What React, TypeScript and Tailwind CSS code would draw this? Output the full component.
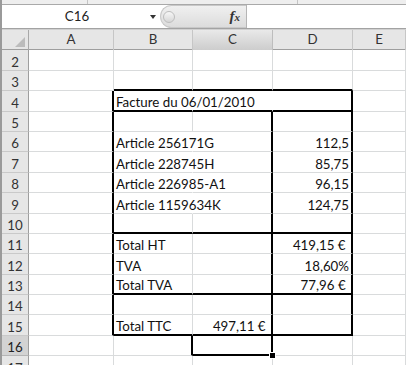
import React from "react";

type Side = "thin" | "thick" | "none";
type Cell = { text?: string; right?: boolean; r?: Side; b?: Side };

const R: Record<Side, string> = {
  thin: "border-r border-r-[#d9dbdc]",
  thick: "border-r-2 border-r-black",
  none: "border-r border-r-transparent",
};
const B: Record<Side, string> = {
  thin: "border-b border-b-[#d9dbdc]",
  thick: "border-b-2 border-b-black",
  none: "border-b border-b-transparent",
};

const cols = ["A", "B", "C", "D", "E"];

// each row: cells A..E, only what differs from a plain cell
function row(n: number): Cell[] {
  const cells: Cell[] = cols.map(() => ({}));
  const [a, b, c, d] = cells;
  const inBox = n >= 5 && n <= 15;
  if (n === 3) {
    b.b = c.b = d.b = "thick";
  }
  if (n === 4) {
    a.r = "thick";
    b.r = "none";
    c.r = "none";
    d.r = "thick";
    b.b = c.b = d.b = "thick";
    b.text = "Facture du 06/01/2010";
  }
  if (inBox) {
    a.r = "thick";
    c.r = "thick";
    d.r = "thick";
  }
  if (n === 10 || n === 13 || n === 15) {
    b.b = c.b = d.b = "thick";
  }
  const items: Record<number, [string, string]> = {
    6: ["Article 256171G", "112,5"],
    7: ["Article 228745H", "85,75"],
    8: ["Article 226985-A1", "96,15"],
    9: ["Article 1159634K", "124,75"],
    11: ["Total HT", "419,15 €\u00a0"],
    12: ["TVA", "18,60%"],
    13: ["Total TVA", "77,96 €\u00a0"],
  };
  if (items[n]) {
    b.text = items[n][0];
    d.text = items[n][1];
    d.right = true;
    if (n >= 6 && n <= 9) b.r = "none";
  }
  if (n === 15) {
    b.text = "Total TTC";
    c.text = "497,11 €\u00a0";
    c.right = true;
  }
  if (n === 16) {
    b.r = "thick";
    c.r = "thick";
    c.b = "thick";
  }
  return cells;
}

const rows = Array.from({ length: 16 }, (_, i) => i + 2);

export default function App() {
  return (
    <div
      className="w-[406px] h-[365px] overflow-hidden bg-white border-l-2 border-l-[#9a9a9a] text-[13.3px] text-[#111]"
      style={{ fontFamily: "Lato, 'Liberation Sans', sans-serif" }}
    >
      {/* ribbon bottom edge */}
      <div className="h-[5px] flex bg-[#eeeeee] border-b border-b-[#a9a9a9]">
        <div className="w-[86px] border-r border-r-[#c4c4c4]" />
        <div className="w-[210px] border-r border-r-[#c4c4c4]" />
      </div>

      {/* formula bar */}
      <div className="h-[24px] flex items-stretch border-b border-b-[#a3a3a3]">
        <div className="w-[158px] flex items-center">
          <span className="flex-1 text-center text-[13.3px] text-[#222] pl-[2px]">C16</span>
          <svg width="6" height="4" viewBox="0 0 6 4" className="mr-[4px]">
            <path d="M0 0h6L3 4z" fill="#333" />
          </svg>
        </div>
        <div className="w-[86px] flex items-center rounded-l-full bg-gradient-to-b from-[#f0f0f0] to-[#dcdcdc] border border-[#c8c8c8] border-r-0">
          <div className="w-[12px] h-[12px] ml-[2px] rounded-full bg-gradient-to-b from-[#f7f7f7] to-[#d6d6d6] border border-[#bdbdbd]" />
          <span
            className="ml-auto mr-[6px] italic font-bold text-[15px] text-[#333] leading-none"
            style={{ fontFamily: "'Liberation Serif', serif" }}
          >
            f<span className="text-[11px]">x</span>
          </span>
        </div>
        <div className="flex-1 border-l border-l-[#b5b5b5] bg-white" />
      </div>

      {/* column headers */}
      <div className="grid grid-cols-[27px_85px_79px_80px_80px_1fr] h-[21.4px] border-t border-t-[#d0d0d0] border-b border-b-[#9e9e9e] bg-[#e6e6e6] text-[#333]">
        <div className="border-r border-r-[#a8a8a8] flex items-end justify-end p-[3px]">
          <svg width="10" height="10" viewBox="0 0 10 10">
            <path d="M10 0v10H0z" fill="#bcbcbc" />
          </svg>
        </div>
        {cols.map((c) => (
          <div
            key={c}
            className={
              c === "C"
                ? "flex items-center justify-center border-r border-r-[#bdbdbd] bg-gradient-to-b from-[#e9e9e9] to-[#cdcdcd]"
                : "flex items-center justify-center border-r border-r-[#c6c6c6]"
            }
          >
            {c}
          </div>
        ))}
      </div>

      {/* sheet */}
      <div className="grid grid-cols-[27px_85px_79px_80px_80px_1fr] auto-rows-[20.4px]">
        {rows.map((n) => (
          <React.Fragment key={n}>
            <div
              className={
                n === 16
                  ? "flex items-end justify-center leading-[16px] bg-[#d3d3d3] text-[#222] border-r border-r-[#9e9e9e] border-b border-b-[#b5b5b5]"
                  : "flex items-end justify-center leading-[16px] bg-[#e6e6e6] text-[#333] border-r border-r-[#9e9e9e] border-b border-b-[#c9c9c9]"
              }
            >
              {n}
            </div>
            {row(n).map((cell, i) => (
              <div
                key={i}
                className={`relative flex items-end leading-[16px] whitespace-nowrap overflow-visible ${R[cell.r ?? "thin"]} ${B[cell.b ?? "thin"]} ${cell.right ? "justify-end pr-[2px]" : "pl-[2px]"}`}
              >
                {cell.text}
                {n === 16 && i === 2 && (
                  <span className="absolute z-10 right-[-5px] bottom-[-5px] w-[7px] h-[7px] bg-black border border-white" />
                )}
              </div>
            ))}
          </React.Fragment>
        ))}
      </div>
    </div>
  );
}
